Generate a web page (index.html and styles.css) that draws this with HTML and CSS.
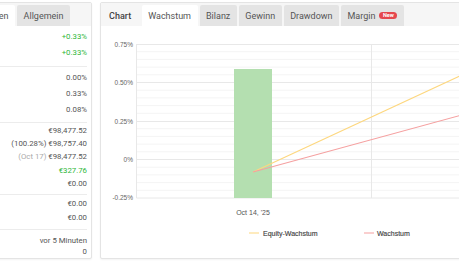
FILE: index.html
```html
<!DOCTYPE html>
<html lang="de">
<head>
<meta charset="utf-8">
<title>Konto</title>
<link rel="stylesheet" href="styles.css">
</head>
<body>
<div class="page">
  <section class="panel stats">
    <div class="panel-head stats-head">
      <span class="tab active">Statistiken</span>
      <span class="tab">Allgemein</span>
    </div>
    <div class="stats-body">
      <div class="group g1">
        <div class="row green">+0.33%</div>
        <div class="row green">+0.33%</div>
      </div>
      <div class="group g2">
        <div class="row">0.00%</div>
        <div class="row">0.33%</div>
        <div class="row">0.08%</div>
      </div>
      <div class="group g3">
        <div class="row">€98,477.52</div>
        <div class="row">(100.28%) €98,757.40</div>
        <div class="row"><span class="muted">(Oct 17)</span> €98,477.52</div>
        <div class="row green">€327.76</div>
        <div class="row">€0.00</div>
      </div>
      <div class="group g4">
        <div class="row">€0.00</div>
        <div class="row">€0.00</div>
      </div>
      <div class="group g5">
        <div class="row">vor 5 Minuten</div>
        <div class="row">0</div>
      </div>
    </div>
  </section>

  <section class="panel chart">
    <div class="panel-head chart-head">
      <span class="chart-title">Chart</span>
      <span class="tab active">Wachstum</span>
      <span class="tab">Bilanz</span>
      <span class="tab">Gewinn</span>
      <span class="tab">Drawdown</span>
      <span class="tab">Margin <span class="badge">New</span></span>
    </div>
    <svg class="plot" width="358" height="232" viewBox="102 26 358 232">
      <g class="minor">
        <line x1="137.5" y1="51.7" x2="520" y2="51.7"/>
        <line x1="137.5" y1="59.4" x2="520" y2="59.4"/>
        <line x1="137.5" y1="67.1" x2="520" y2="67.1"/>
        <line x1="137.5" y1="74.8" x2="520" y2="74.8"/>
        <line x1="137.5" y1="90.2" x2="520" y2="90.2"/>
        <line x1="137.5" y1="97.9" x2="520" y2="97.9"/>
        <line x1="137.5" y1="105.6" x2="520" y2="105.6"/>
        <line x1="137.5" y1="113.3" x2="520" y2="113.3"/>
        <line x1="137.5" y1="128.7" x2="520" y2="128.7"/>
        <line x1="137.5" y1="136.4" x2="520" y2="136.4"/>
        <line x1="137.5" y1="144.1" x2="520" y2="144.1"/>
        <line x1="137.5" y1="151.8" x2="520" y2="151.8"/>
        <line x1="137.5" y1="167.2" x2="520" y2="167.2"/>
        <line x1="137.5" y1="174.9" x2="520" y2="174.9"/>
        <line x1="137.5" y1="182.6" x2="520" y2="182.6"/>
        <line x1="137.5" y1="190.3" x2="520" y2="190.3"/>
      </g>
      <g class="major">
        <line x1="137.5" y1="44.5" x2="520" y2="44.5"/>
        <line x1="137.5" y1="82.5" x2="520" y2="82.5"/>
        <line x1="137.5" y1="121.5" x2="520" y2="121.5"/>
        <line x1="137.5" y1="159.5" x2="520" y2="159.5"/>
        <line x1="137.5" y1="198" x2="520" y2="198"/>
        <line x1="137.5" y1="44" x2="137.5" y2="198"/>
        <line x1="372.5" y1="44" x2="372.5" y2="198"/>
      </g>
      <g class="ylabels">
        <text x="134" y="46.5">0.75%</text>
        <text x="134" y="84.8">0.50%</text>
        <text x="134" y="123.6">0.25%</text>
        <text x="134" y="161.8">0%</text>
        <text x="134" y="200.4">-0.25%</text>
      </g>
      <rect class="bar" x="235" y="69" width="38" height="129"/>
      <line class="equity" x1="254" y1="172" x2="461" y2="76"/>
      <line class="growth" x1="254" y1="172" x2="461" y2="115.5"/>
      <text class="xlabel" x="254" y="214.5">Oct 14, '25</text>
      <g class="legend">
        <line class="equity" x1="250" y1="233" x2="260" y2="233"/>
        <text x="264" y="235.5">Equity-Wachstum</text>
        <line class="growth" x1="365" y1="233" x2="375" y2="233"/>
        <text x="378" y="235.5">Wachstum</text>
      </g>
    </svg>
  </section>
</div>
</body>
</html>
```

FILE: styles.css
```css
html, body {
  margin: 0;
  padding: 0;
  background: #ffffff;
}

body {
  width: 459px;
  height: 262px;
  overflow: hidden;
  font-family: Roboto, "Liberation Sans", sans-serif;
  color: #555555;
}

.page {
  display: flex;
  gap: 8px;
  padding-top: 2px;
}

.panel {
  box-sizing: border-box;
  height: 257px;
  border: 1px solid #e4e4e4;
  border-radius: 2px;
  background: #ffffff;
  box-shadow: 0 1px 2px rgba(0, 0, 0, 0.05);
  overflow: hidden;
  flex: 0 0 auto;
}

.stats {
  width: 221px;
  margin-left: -129px;
}

.chart {
  width: 400px;
}

.panel-head {
  box-sizing: border-box;
  height: 23px;
  padding-top: 2px;
  background: #f6f6f6;
  display: flex;
  align-items: stretch;
  gap: 2px;
}

.stats-head {
  justify-content: flex-end;
  padding-right: 21px;
}

.tab {
  display: flex;
  align-items: center;
  padding: 0 6.5px;
  font-size: 9px;
  color: #555555;
  background: #e4e4e4;
  border-radius: 2px 2px 0 0;
  white-space: nowrap;
}

.tab.active {
  background: #ffffff;
}

.chart-title {
  display: flex;
  align-items: center;
  padding-left: 8px;
  margin-right: 8.5px;
  font-size: 9px;
  font-weight: 500;
  color: #444444;
}

.badge {
  display: inline-block;
  margin-left: 4px;
  padding: 0 3.5px;
  height: 7px;
  line-height: 7px;
  border-radius: 4px;
  background: #e5474e;
  color: #ffffff;
  font-size: 5.5px;
  font-weight: 700;
}

.stats-body {
  padding: 0 4px 0 8px;
}

.group {
  box-sizing: border-box;
  border-top: 1px solid #ececec;
  font-size: 7.8px;
  text-align: right;
}

.g1 {
  border-top: none;
  height: 40px;
  padding-top: 3px;
}

.g1 .row, .g2 .row {
  height: 16px;
  line-height: 16px;
}

.g2 {
  height: 56px;
  padding-top: 3px;
}

.g3 {
  height: 72px;
  padding-top: 1px;
}

.g3 .row {
  height: 13.2px;
  line-height: 13.2px;
}

.g4 {
  height: 35px;
  padding-top: 2px;
}

.g4 .row {
  height: 14px;
  line-height: 14px;
}

.g5 {
  padding-top: 5px;
}

.g5 .row {
  height: 11px;
  line-height: 11px;
}

.row {
  white-space: nowrap;
}

.green {
  color: #2fb73a;
}

.muted {
  color: #aaaaaa;
}

.plot {
  display: block;
  font-family: "Liberation Sans", Arial, sans-serif;
}

.minor line {
  stroke: #f4f4f4;
  stroke-width: 1;
}

.major line {
  stroke: #e8e8e8;
  stroke-width: 1;
}

.ylabels text {
  font-size: 6.5px;
  fill: #666666;
  text-anchor: end;
}

.bar {
  fill: #b4dfb0;
}

line.equity {
  stroke: #fdd77e;
  stroke-width: 1.1;
}

line.growth {
  stroke: #f5a0a0;
  stroke-width: 1.1;
}

.xlabel {
  font-size: 7px;
  fill: #555555;
  text-anchor: middle;
}

.legend text {
  font-size: 7px;
  fill: #444444;
  stroke: #444444;
  stroke-width: 0.15;
}
```
